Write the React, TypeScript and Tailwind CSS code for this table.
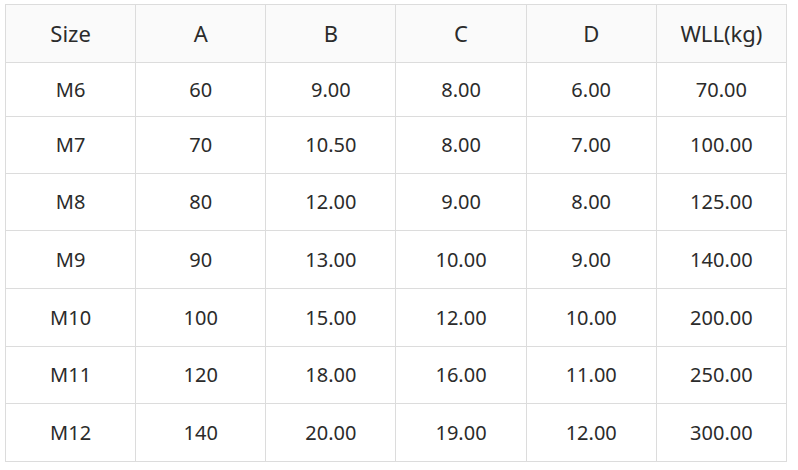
import React from 'react';

const headers = ['Size', 'A', 'B', 'C', 'D', 'WLL(kg)'];

const rows: { cells: string[]; h: string }[] = [
  { cells: ['M6', '60', '9.00', '8.00', '6.00', '70.00'], h: 'h-[54px]' },
  { cells: ['M7', '70', '10.50', '8.00', '7.00', '100.00'], h: 'h-[57px]' },
  { cells: ['M8', '80', '12.00', '9.00', '8.00', '125.00'], h: 'h-[57px]' },
  { cells: ['M9', '90', '13.00', '10.00', '9.00', '140.00'], h: 'h-[58px]' },
  { cells: ['M10', '100', '15.00', '12.00', '10.00', '200.00'], h: 'h-[58px]' },
  { cells: ['M11', '120', '18.00', '16.00', '11.00', '250.00'], h: 'h-[57px]' },
  { cells: ['M12', '140', '20.00', '19.00', '12.00', '300.00'], h: 'h-[58px]' },
];

export default function App() {
  return (
    <div className="w-[798px] h-[470px] bg-white pl-[5px] pt-[4px] font-['Noto_Sans',sans-serif] text-[#2b2b2b]">
      <table className="w-[782px] border-collapse table-fixed text-[20px]">
        <thead>
          <tr className="h-[58px] bg-[#fafafa]">
            {headers.map((h) => (
              <th key={h} className="border border-[#dcdcdc] font-normal text-[22px] text-center p-0">
                {h}
              </th>
            ))}
          </tr>
        </thead>
        <tbody>
          {rows.map((r) => (
            <tr key={r.cells[0]} className={r.h}>
              {r.cells.map((c, i) => (
                <td key={i} className="border border-[#dcdcdc] text-center p-0">
                  {c}
                </td>
              ))}
            </tr>
          ))}
        </tbody>
      </table>
    </div>
  );
}
